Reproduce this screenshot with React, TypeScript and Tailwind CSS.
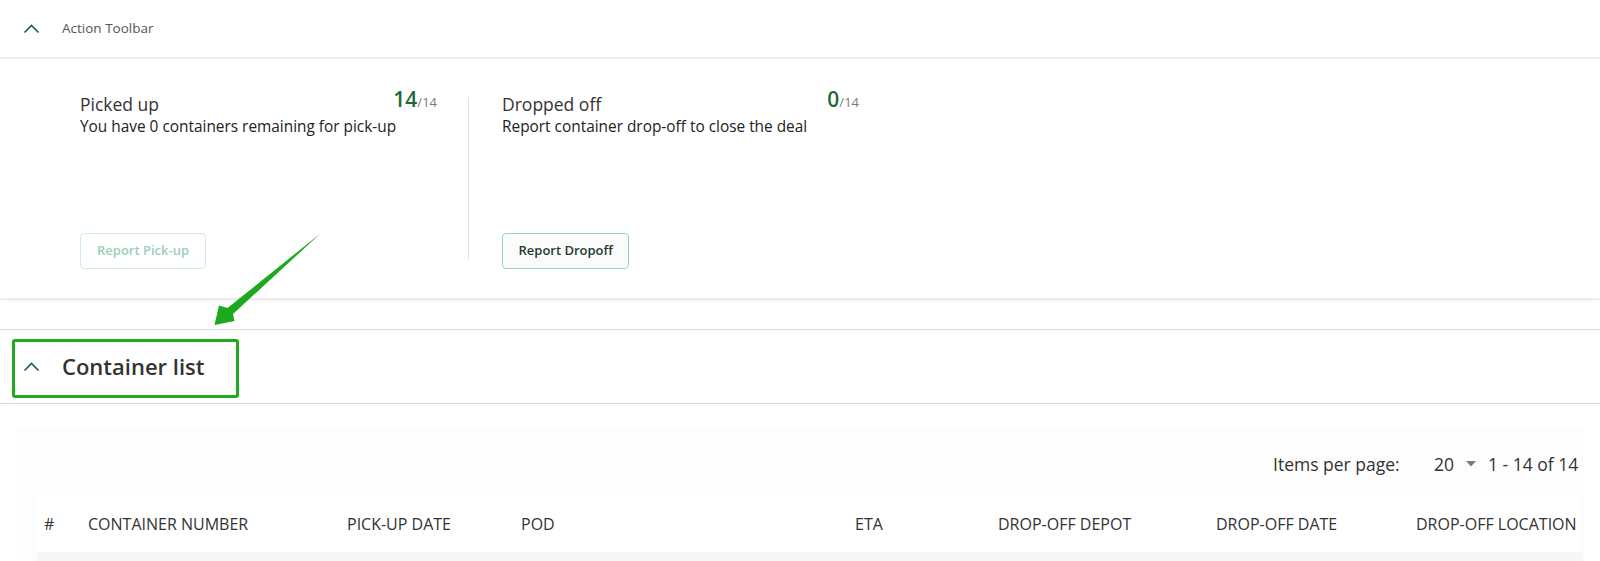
import React from "react";

function Chevron() {
  return (
    <svg width="17" height="10" viewBox="0 0 17 10" className="block">
      <polyline points="1.5,8.5 8.5,1.5 15.5,8.5" fill="none" stroke="#1f5f4c" strokeWidth="1.7" />
    </svg>
  );
}

function Stat({
  title,
  sub,
  value,
  total,
  button,
  disabled,
}: {
  title: string;
  sub: string;
  value: string;
  total: string;
  button: string;
  disabled?: boolean;
}) {
  return (
    <div className="w-[357px] h-[181px] flex flex-col">
      <div className="flex items-end justify-between h-[28px]">
        <span className="text-[17.5px] leading-[24px] text-[#333]">{title}</span>
        <span className="leading-[28px]">
          <span className="text-[21px] font-semibold text-[#1d6b33]">{value}</span>
          <span className="text-[13px] text-[#7a7a7a]">/{total}</span>
        </span>
      </div>
      <div className="text-[15.4px] leading-[20px] text-[#222] mt-[1px]">{sub}</div>
      <div className="mt-auto">
        <button
          className={
            disabled
              ? "h-[36px] px-[16px] rounded-[4px] border border-[#cfece0] bg-white text-[13px] font-semibold text-[#9ccfb5]"
              : "h-[36px] px-[15.5px] rounded-[4px] border border-[#95d5ba] bg-[#fafcfb] text-[13px] font-semibold text-[#1f3a2d]"
          }
        >
          {button}
        </button>
      </div>
    </div>
  );
}

export default function App() {
  const cols = [
    "#",
    "CONTAINER NUMBER",
    "PICK-UP DATE",
    "POD",
    "ETA",
    "DROP-OFF DEPOT",
    "DROP-OFF DATE",
    "DROP-OFF LOCATION",
  ];
  return (
    <div className="relative w-[1600px] h-[561px] overflow-hidden bg-white font-['Open_Sans',sans-serif]">
      {/* Action toolbar panel */}
      <div className="shadow-[0_2px_3px_rgba(0,0,0,0.10)]">
        <div className="h-[59px] flex items-center border-b-2 border-[#ececec]">
          <div className="ml-[23px]">
            <Chevron />
          </div>
          <span className="ml-[22px] text-[13.5px] text-[#555]">Action Toolbar</span>
        </div>
        <div className="h-[239px] flex pl-[80px] pt-[29px]">
          <Stat
            title="Picked up"
            sub="You have 0 containers remaining for pick-up"
            value="14"
            total="14"
            button="Report Pick-up"
            disabled
          />
          <div className="ml-[31px] mt-[9px] w-px h-[163px] bg-[#e2e2e2]" />
          <div className="ml-[33px]">
            <Stat
              title="Dropped off"
              sub="Report container drop-off to close the deal"
              value="0"
              total="14"
              button="Report Dropoff"
            />
          </div>
        </div>
      </div>

      {/* Container list header */}
      <div className="mt-[31px] h-[75px] border-t border-b border-[#dcdcdc] flex items-center">
        <div className="ml-[23px]">
          <Chevron />
        </div>
        <span className="ml-[22px] text-[22px] font-semibold text-[#333]">Container list</span>
      </div>

      {/* Table card */}
      <div className="mt-[27px] ml-[18px] mr-[18px] h-[200px] bg-[#fdfdfd] shadow-[0_0_2px_rgba(0,0,0,0.06)]">
        <div className="flex justify-end items-center pt-[21px] pr-[4px] text-[17.5px] leading-[24px] text-[#333] whitespace-nowrap">
          <span className="w-[133px]">Items per page:</span>
          <span className="ml-[28px] w-[20px]">20</span>
          <svg width="10" height="6" viewBox="0 0 10 6" className="ml-[12px] mr-[12px]">
            <polygon points="0,0 10,0 5,5.5" fill="#7a7a7a" />
          </svg>
          <span className="w-[90px]">1 - 14 of 14</span>
        </div>
        <div className="ml-[19px] mt-[20px] h-[56px] grid grid-cols-[51px_259px_174px_334px_143px_218px_200px_1fr] items-center text-[16px] text-[#333] bg-white whitespace-nowrap">
          {cols.map((c, i) => (
            <div key={c} className={i === 0 ? "pl-[7px]" : ""}>
              {c}
            </div>
          ))}
        </div>
        <div className="ml-[19px] h-[40px] bg-[#f7f7f7]" />
      </div>

      {/* Annotation overlay: highlight box */}
      <div className="absolute left-[12px] top-[339px] w-[227px] h-[59px] border-[3px] border-[#1faa1f] rounded-[3px]" />
      {/* Annotation overlay: arrow */}
      <svg className="absolute left-0 top-0" width="400" height="400" viewBox="0 0 400 400">
        <polygon
          points="321,233 233,314 234.5,321 214.5,325 219,305.5 227.5,308"
          fill="#1ea81e"
        />
      </svg>
    </div>
  );
}
